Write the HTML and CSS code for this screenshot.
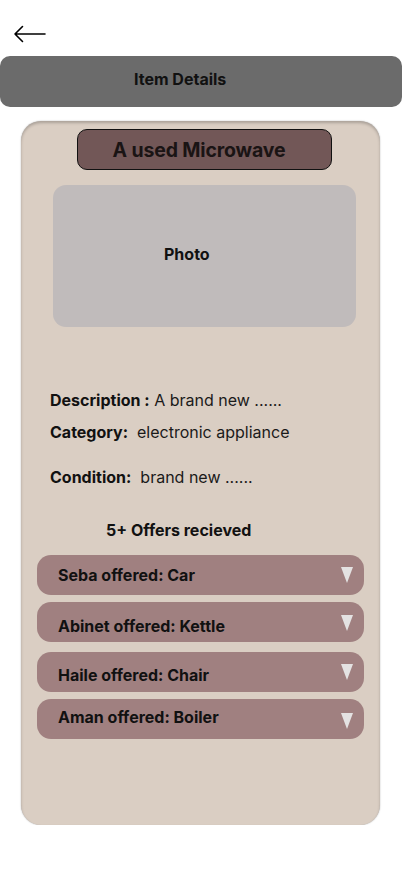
FILE: index.html
```html
<!DOCTYPE html>
<html lang="en">
<head>
<meta charset="utf-8">
<title>Item Details</title>
<link rel="stylesheet" href="styles.css">
</head>
<body>
<div class="page">
  <div class="topbar">
    <svg class="back" width="34" height="18" viewBox="0 0 34 18" aria-hidden="true">
      <path d="M2 9 H32 M9.5 1.5 L2 9 L9.5 16.5" fill="none" stroke="#000" stroke-width="1.6" stroke-linecap="round" stroke-linejoin="round"/>
    </svg>
  </div>
  <header class="header"><span class="header-title">Item Details</span></header>
  <main class="card">
    <div class="title-pill">A used Microwave</div>
    <div class="photo"><span class="photo-label">Photo</span></div>
    <div class="details">
      <p class="line"><b>Description :</b> A brand new ......</p>
      <p class="line"><b>Category:</b>&nbsp; electronic appliance</p>
      <p class="line line-gap"><b>Condition:</b>&nbsp; brand new ......</p>
    </div>
    <h2 class="offers-title">5+ Offers recieved</h2>
    <div class="offers">
      <div class="offer offer-a"><span>Seba offered: Car</span><span class="tri"></span></div>
      <div class="offer offer-b"><span>Abinet offered: Kettle</span><span class="tri"></span></div>
      <div class="offer offer-c"><span>Haile offered: Chair</span><span class="tri"></span></div>
      <div class="offer offer-d"><span>Aman offered: Boiler</span><span class="tri"></span></div>
    </div>
  </main>
</div>
</body>
</html>
```

FILE: styles.css
```css
* { box-sizing: border-box; }
html, body { margin: 0; padding: 0; background: #fff; }
body {
  font-family: Inter, "Noto Sans", "Liberation Sans", sans-serif;
  color: #111;
}
.page {
  width: 402px;
  display: flex;
  flex-direction: column;
}
.topbar {
  height: 56px;
  padding: 25px 0 0 13px;
}
.back { display: block; }
.header {
  height: 51px;
  background: #6b6b6b;
  border-radius: 10px;
  display: flex;
  align-items: center;
  padding: 0 0 5px 134px;
}
.header-title {
  font-weight: 700;
  font-size: 16px;
  color: #111;
}
.card {
  margin: 14px 0 0 21px;
  width: 359px;
  height: 704px;
  background: #dacec3;
  border-radius: 20px;
  box-shadow: inset 0 2px 3px rgba(0,0,0,0.22), 0 0 1.5px rgba(0,0,0,0.35);
  padding: 8px 0 0 0;
  display: flex;
  flex-direction: column;
}
.title-pill {
  margin-left: 56px;
  width: 255px;
  height: 41px;
  background: #725757;
  border: 1px solid #111;
  border-radius: 10px;
  display: flex;
  align-items: center;
  justify-content: center;
  padding-right: 11px;
  font-weight: 700;
  font-size: 19.5px;
  letter-spacing: -0.15px;
  color: #1a1414;
}
.photo {
  margin: 15px 0 0 32px;
  width: 303px;
  height: 142px;
  background: #c0bbbb;
  border-radius: 13px;
  display: flex;
  align-items: center;
  padding: 0 0 5px 111px;
}
.photo-label {
  font-weight: 700;
  font-size: 16px;
  color: #111;
}
.details {
  margin: 64px 0 0 29px;
  display: flex;
  flex-direction: column;
}
.line {
  margin: 0;
  font-size: 16px;
  line-height: 18px;
  color: #1a1a1a;
}
.line + .line { margin-top: 14px; }
.line + .line-gap { margin-top: 27px; }
.line b { font-weight: 700; color: #111; }
.offers-title {
  margin: 35px 0 0 85px;
  font-size: 16px;
  line-height: 18px;
  font-weight: 700;
  color: #111;
}
.offers {
  margin: 16px 0 0 16px;
  width: 327px;
  display: flex;
  flex-direction: column;
}
.offer {
  height: 40px;
  background: #a08080;
  border-radius: 14px;
  display: flex;
  align-items: center;
  justify-content: space-between;
  padding: 0 11px 0 21px;
  font-weight: 700;
  font-size: 16px;
  color: #111;
}
.offer-a { margin-top: 0; }
.offer-b { margin-top: 7px; padding-top: 7px; }
.offer-c { margin-top: 10px; padding-top: 6px; }
.offer-d { margin-top: 7px; padding-bottom: 4px; }
.tri {
  width: 0;
  height: 0;
  border-left: 6px solid transparent;
  border-right: 6px solid transparent;
  border-top: 16px solid #e4e2e2;
  align-self: center;
}
.offer-b .tri, .offer-c .tri { margin-top: -6px; }
.offer-d .tri { margin-top: 8px; }
```
